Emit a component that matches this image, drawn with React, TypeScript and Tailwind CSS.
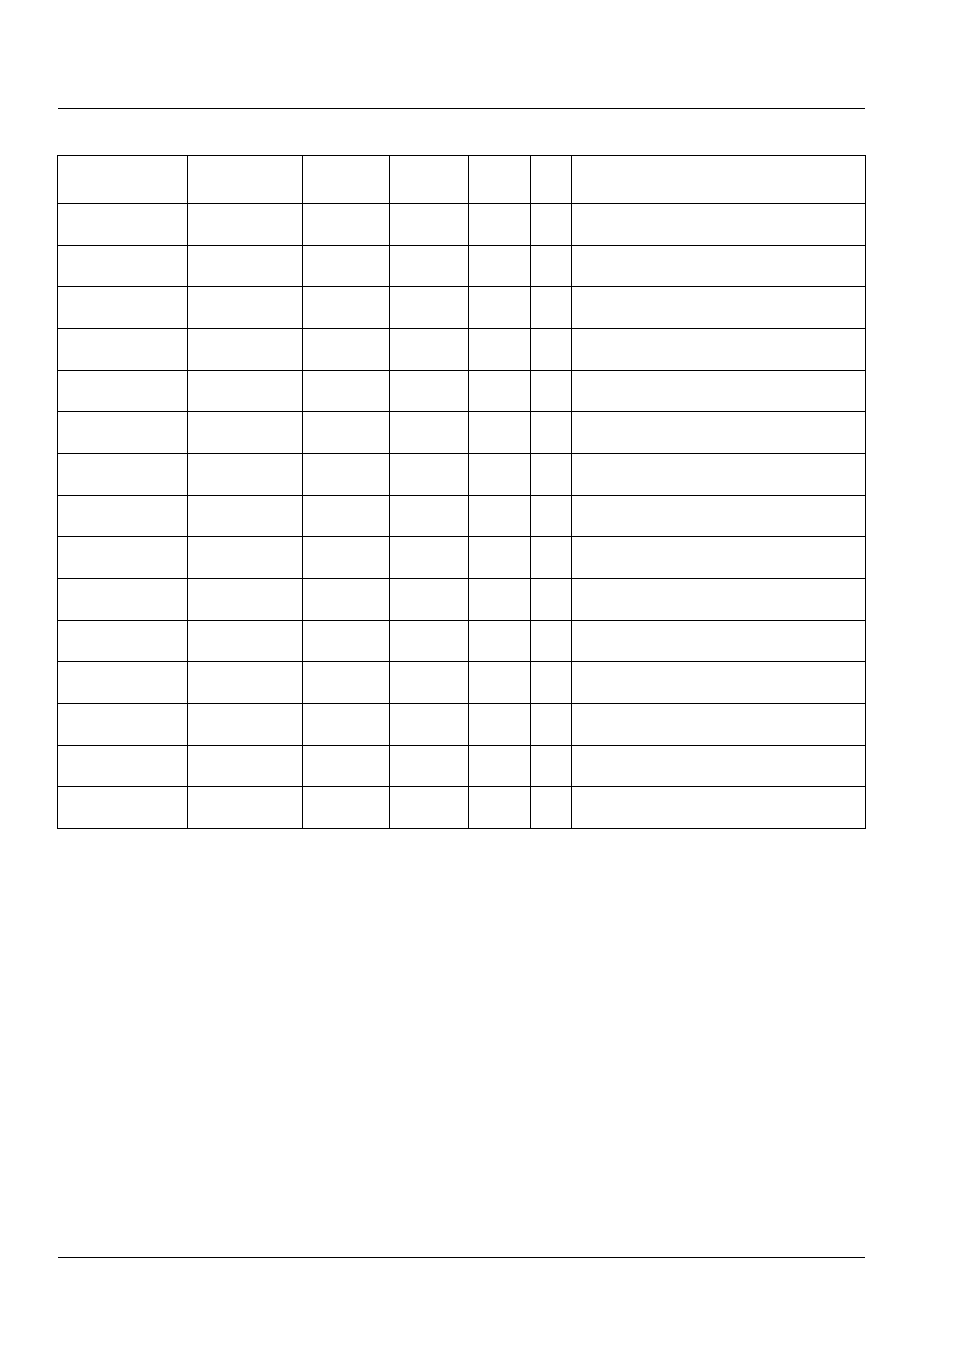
export default function App() {
  const cols = 7;
  const rows = 16;
  const cells = Array.from({ length: rows * cols }, (_, i) => i);
  return (
    <div className="relative w-[954px] min-h-[1350px] bg-white font-['Liberation_Sans',sans-serif]">
      <div className="pt-[108px]">
        <div className="ml-[58px] w-[807px] h-px bg-black" />
      </div>
      <div className="mt-[46px] ml-[57px] w-[809px] border-t border-l border-black grid grid-cols-[130px_115px_87px_79px_62px_41px_294px] grid-rows-[48px_repeat(15,41.67px)]">
        {cells.map((i) => (
          <div key={i} className="border-r border-b border-black" />
        ))}
      </div>
      <div className="mt-[428px] ml-[58px] w-[807px] h-px bg-black" />
    </div>
  );
}
